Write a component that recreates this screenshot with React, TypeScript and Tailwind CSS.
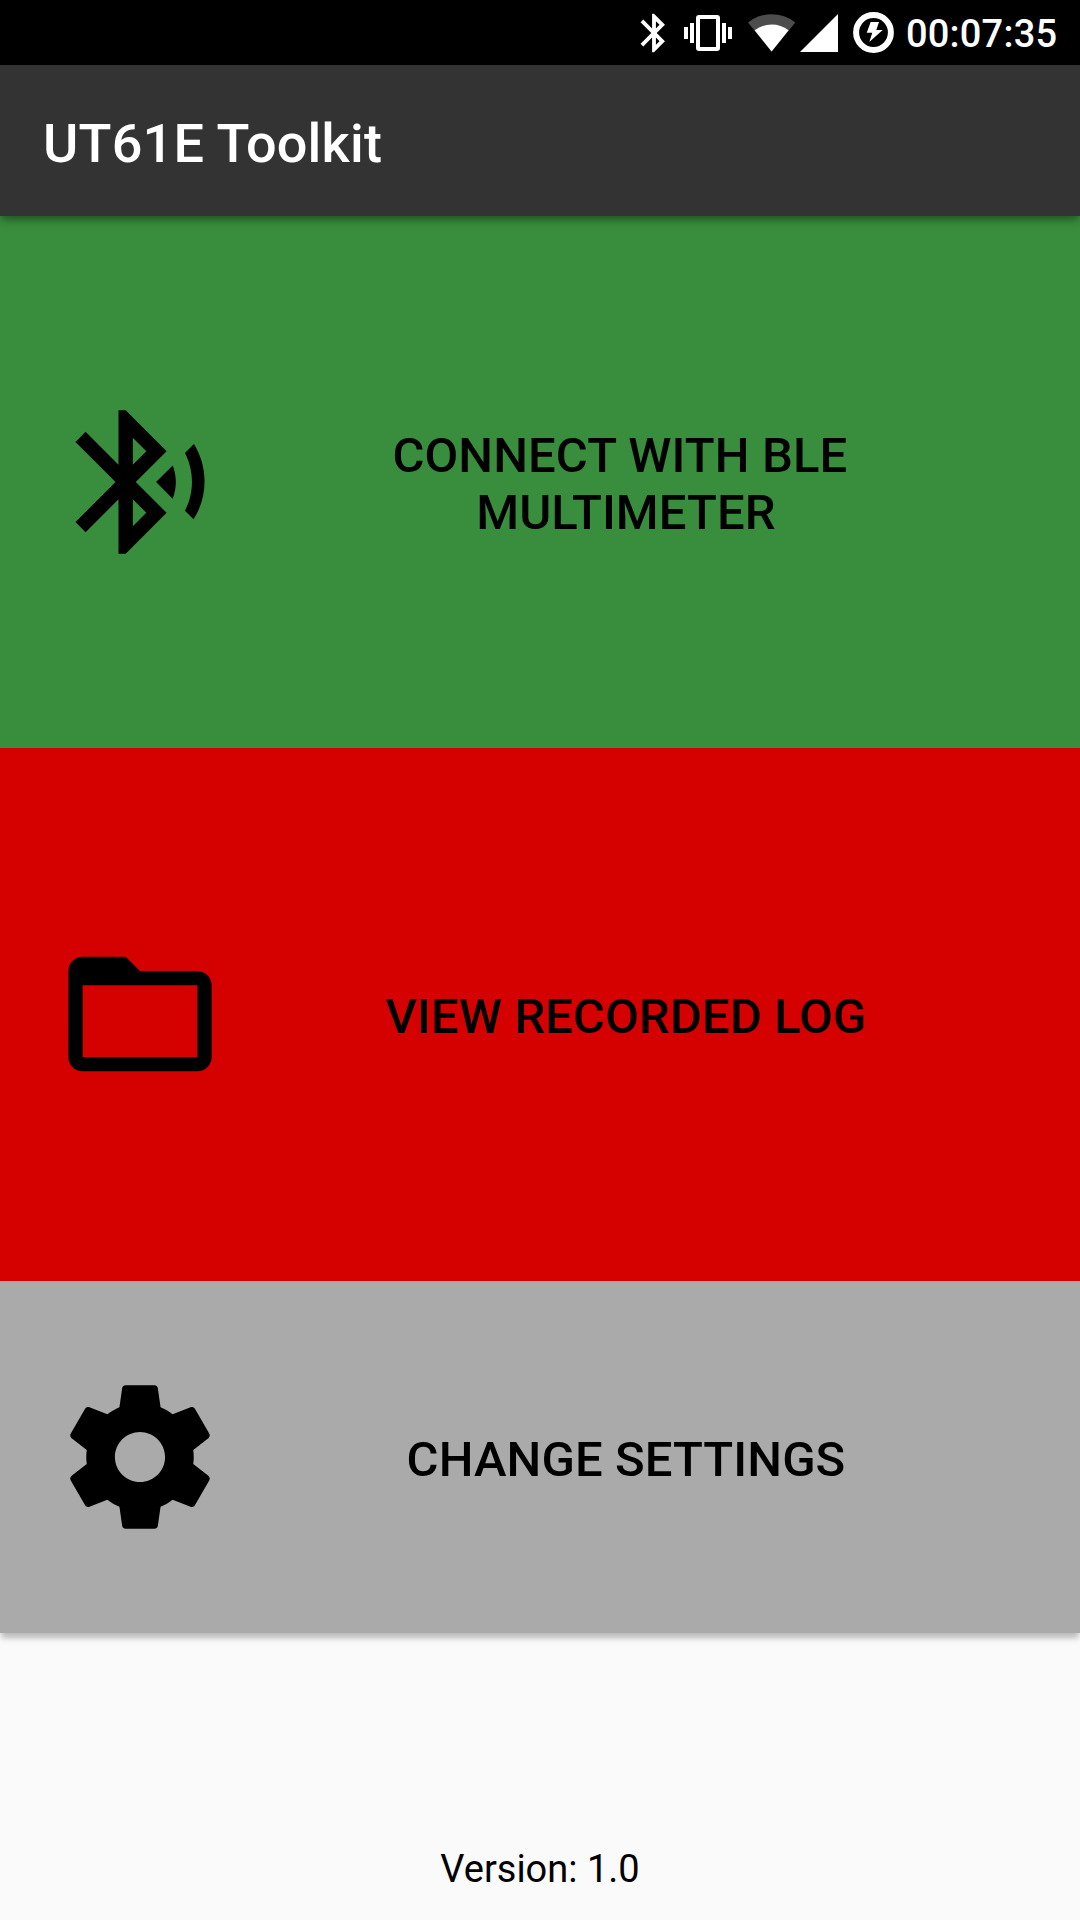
import React from "react";
import { MdBluetooth, MdFolderOpen, MdBluetoothAudio } from "react-icons/md";

function VibrateIcon({ className }: { className: string }) {
  return (
    <svg className={className} viewBox="0 0 48 36" fill="white">
      <rect x="0" y="12" width="4" height="12" />
      <rect x="6" y="8" width="4" height="20" />
      <rect x="14" y="2" width="20" height="32" rx="1" fill="none" stroke="white" strokeWidth="4" />
      <rect x="38" y="8" width="4" height="20" />
      <rect x="44" y="12" width="4" height="12" />
    </svg>
  );
}

function WifiIcon({ className }: { className: string }) {
  return (
    <svg className={className} viewBox="0 0 48 38">
      <path d="M0 8.5A38 38 0 0 1 47.3 8.5L23.6 37.5Z" fill="#4d4d4d" />
      <path d="M6.6 16.3A28 28 0 0 1 40.6 16.3L23.6 37.5Z" fill="white" />
    </svg>
  );
}

function BatteryIcon({ className }: { className: string }) {
  return (
    <svg className={className} viewBox="0 0 41 41">
      <circle cx="20.5" cy="20.5" r="17.4" fill="none" stroke="white" strokeWidth="6" />
      <path d="M17.7 10H26L23.3 18H29.7L16.3 30L19.3 20.7H13.7Z" fill="white" />
    </svg>
  );
}

function GearIcon({ className }: { className: string }) {
  return (
    <svg className={className} viewBox="0 0 24 24" fill="currentColor">
      <path d="M19.43 12.98c.04-.32.07-.64.07-.98s-.03-.66-.07-.98l2.11-1.65c.19-.15.24-.42.12-.64l-2-3.46c-.12-.22-.39-.3-.61-.22l-2.49 1c-.52-.4-1.08-.73-1.69-.98l-.38-2.65C14.46 2.18 14.25 2 14 2h-4c-.25 0-.46.18-.49.42l-.38 2.65c-.61.25-1.17.59-1.69.98l-2.49-1c-.23-.09-.49 0-.61.22l-2 3.46c-.13.22-.07.49.12.64l2.11 1.65c-.04.32-.07.65-.07.98s.03.66.07.98l-2.11 1.65c-.19.15-.24.42-.12.64l2 3.46c.12.22.39.3.61.22l2.49-1c.52.4 1.08.73 1.69.98l.38 2.65c.03.24.24.42.49.42h4c.25 0 .46-.18.49-.42l.38-2.65c.61-.25 1.17-.59 1.69-.98l2.49 1c.23.09.49 0 .61-.22l2-3.46c.12-.22.07-.49-.12-.64l-2.11-1.65zM12 15.5c-1.93 0-3.5-1.57-3.5-3.5s1.57-3.5 3.5-3.5 3.5 1.57 3.5 3.5-1.57 3.5-3.5 3.5z" />
    </svg>
  );
}

function Row({ className, icon, children }: { className: string; icon: React.ReactNode; children: React.ReactNode }) {
  return (
    <button className={`flex w-full items-center pl-[54px] text-black ${className}`}>
      {icon}
      <span className="ml-[130px] w-[540px] pt-[4px] text-center text-[49px] font-medium leading-[57px] tracking-[0.1px]">{children}</span>
    </button>
  );
}

export default function App() {
  return (
    <div className="flex h-[1920px] w-[1080px] flex-col overflow-hidden bg-[#fafafa] font-['Roboto',sans-serif]">
      <div className="flex h-[65px] shrink-0 items-center bg-black pl-[631px] text-white">
        <MdBluetooth className="size-[46px] shrink-0" />
        <VibrateIcon className="ml-[7px] mt-px h-[36px] w-[48px] shrink-0" />
        <WifiIcon className="ml-[16px] h-[38px] w-[48px] shrink-0" />
        <svg className="ml-[4px] h-[38px] w-[38px] shrink-0" viewBox="0 0 38 38"><path d="M38 0V38H0Z" fill="white" /></svg>
        <BatteryIcon className="ml-[15px] size-[41px] shrink-0" />
        <span className="ml-[12px] pt-[3px] text-[38px] font-medium leading-none tracking-[0.2px]">00:07:35</span>
      </div>
      <header className="relative z-10 flex h-[151px] shrink-0 items-center bg-[#333] pl-[43px] pt-[5px] text-[54px] font-medium tracking-[0.2px] text-white shadow-[0_5px_8px_-1px_rgba(0,0,0,0.4)]">
        <h1>UT61E Toolkit</h1>
      </header>
      <main className="shrink-0 shadow-[0_6px_6px_-1px_rgba(0,0,0,0.26)]">
        <Row className="h-[532px] bg-[#388e3c]" icon={<MdBluetoothAudio className="size-[172px]" />}>
          CONNECT WITH BLE&nbsp;<br />MULTIMETER
        </Row>
        <Row className="h-[533px] bg-[#d50000]" icon={<MdFolderOpen className="-mt-px size-[172px]" />}>VIEW RECORDED LOG</Row>
        <Row className="h-[352px] bg-[#aaa]" icon={<GearIcon className="size-[172px]" />}>CHANGE SETTINGS</Row>
      </main>
      <footer className="flex flex-1 items-end justify-center pb-[22px] text-[38px] text-black">Version: 1.0</footer>
    </div>
  );
}
